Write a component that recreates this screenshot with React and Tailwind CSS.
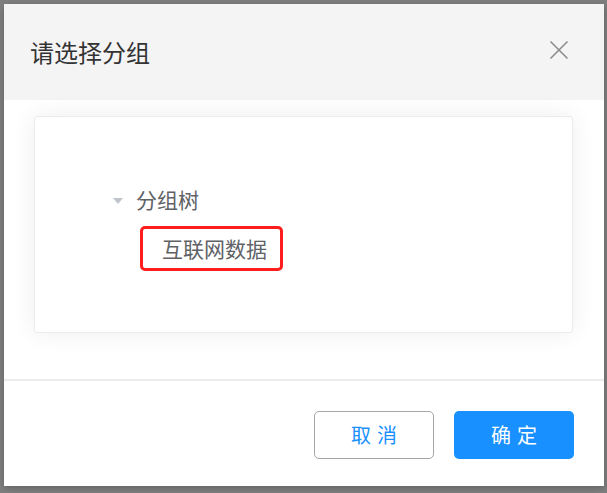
import React from 'react';

const font = { fontFamily: '"Noto Sans CJK SC", "Noto Sans", sans-serif' };

const CloseIcon = () => (
  <svg width="20" height="20" viewBox="0 0 20 20" fill="none" stroke="#8c8c8c" strokeWidth="1.6">
    <path d="M1.5 1.5 18.5 18.5M18.5 1.5 1.5 18.5" />
  </svg>
);

const GroupDialog = () => {
  return (
    <div className="w-[600px] h-[482px] bg-white flex flex-col shadow-[0_2px_8px_rgba(0,0,0,0.25)]">
      <div className="h-[96px] bg-[#f4f4f4] flex items-center justify-between pl-[26px] pr-[35px]">
        <span className="text-[24px] text-[#333333] leading-none pb-[1px]">请选择分组</span>
        <button className="p-0 pb-[4px]">
          <CloseIcon />
        </button>
      </div>

      <div className="flex-1 px-[30px] pt-[16px]">
        <div className="h-[217px] w-[539px] bg-white rounded-[3px] border border-[#ececef] shadow-[0_0_24px_rgba(0,0,0,0.07)] pl-[78px] pt-[68px]">
          <div className="flex items-center h-[30px]">
            <span className="w-0 h-0 border-l-[5px] border-r-[5px] border-t-[6px] border-l-transparent border-r-transparent border-t-[#c0c4cc] mt-[1px]"></span>
            <span className="ml-[13px] text-[21px] text-[#606266]">分组树</span>
          </div>
          <div className="ml-[27px] mt-[11px] w-[143px] h-[45px] border-[3px] border-[#ff1e1e] rounded-[5px] flex items-center pl-[19px]">
            <span className="text-[21px] text-[#606266]">互联网数据</span>
          </div>
        </div>
      </div>

      <div className="h-[107px] border-t-[2px] border-[#ececec] flex justify-end items-start pt-[30px] pr-[30px] gap-[20px]">
        <button className="w-[120px] h-[48px] rounded-[5px] border border-[#a6a6a6] bg-white text-[#1890ff] text-[20px] tracking-[6px] pl-[6px]">
          取消
        </button>
        <button className="w-[120px] h-[48px] rounded-[5px] bg-[#1890ff] text-white text-[20px] tracking-[6px] pl-[6px]">
          确定
        </button>
      </div>
    </div>
  );
};

export default function App() {
  return (
    <div className="w-[607px] h-[493px] bg-[#808080] overflow-hidden pt-[4px] pl-[4px]" style={font}>
      <GroupDialog />
    </div>
  );
}
